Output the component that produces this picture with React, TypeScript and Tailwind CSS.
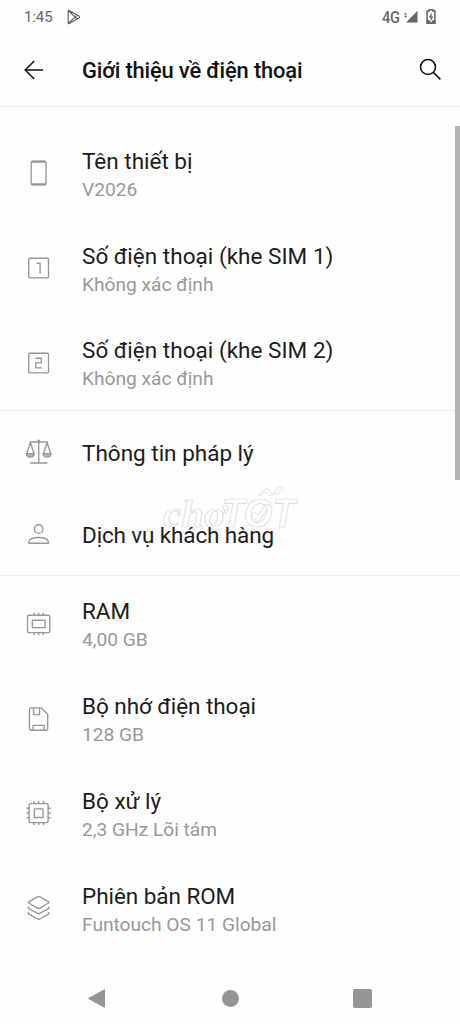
import type { ReactNode } from "react";

const Icon = ({ children }: { children: ReactNode }) => (
  <svg
    width="32"
    height="32"
    viewBox="-16.5 -16 32 32"
    fill="none"
    stroke="#979797"
    strokeWidth="1.35"
    strokeLinejoin="round"
    className="shrink-0"
  >
    {children}
  </svg>
);

const PhoneIcon = () => (
  <Icon>
    <rect x="-7.3" y="-11.8" width="14.8" height="23.6" rx="1.5" />
    <path d="M-6.8 -11.3H7M-6.8 11.3H7" strokeWidth="2" />
  </Icon>
);

const SimOneIcon = () => (
  <Icon>
    <rect x="-9.8" y="-9.8" width="19.8" height="19.6" rx="1" />
    <path d="M-1.8 -4.8H1.6V5.8" />
  </Icon>
);

const SimTwoIcon = () => (
  <Icon>
    <rect x="-9.8" y="-9.8" width="19.8" height="19.6" rx="1" />
    <path d="M-3.2 -4.8H2.8V-0.2H-2.8V4.8H3.4" />
  </Icon>
);

const ScalesIcon = () => (
  <Icon>
    <path d="M0.2 -11.5V11M-8.8 -10H9.2M-8.4 11H8.8M-8.1 -9.5L-11.8 2M-8.1 -9.5L-4.4 2M8.6 -9.5L4.9 2M8.6 -9.5L12.2 2" />
    <path d="M-12.2 1.6H-4.2C-4.7 6.2 -11.7 6.2 -12.2 1.6ZM4.6 1.6H12.6C12.1 6.2 5.1 6.2 4.6 1.6Z" fill="#b5b5b5" />
    <circle cx="0.2" cy="-11" r="1.5" fill="#979797" stroke="none" />
  </Icon>
);

const PersonIcon = () => (
  <Icon>
    <circle cx="0.2" cy="-5" r="4.3" />
    <path d="M-9.7 9.2V7.8C-8.2 2 8.5 2 10 7.8V9.2Z" />
  </Icon>
);

const RamIcon = () => (
  <Icon>
    <rect x="-11" y="-8.8" width="22.2" height="17.4" rx="1.5" />
    <rect x="-6.2" y="-3.8" width="12.8" height="7.4" />
    <path d="M-4.4 -11.2V-8.6M0.2 -11.2V-8.6M4.8 -11.2V-8.6M-4.4 8.6V11M0.2 8.6V11M4.8 8.6V11" />
  </Icon>
);

const StorageIcon = () => (
  <Icon>
    <path d="M-7.6 -11.2H2.6L9.2 -4.8V9.6Q9.2 11.2 7.6 11.2H-7.4Q-9 11.2 -9 9.6V-9.8Q-9 -11.2 -7.6 -11.2Z" />
    <path d="M-5 -11V-4.4H1V-11M-5.4 11V6.4H5.8V11" />
  </Icon>
);

const CpuIcon = () => (
  <Icon>
    <rect x="-9.4" y="-9.4" width="19" height="19" rx="1.5" />
    <rect x="-4.1" y="-4.1" width="8.6" height="8.6" />
    <path d="M-4.6 -12V-9.4M0.2 -12V-9.4M5 -12V-9.4M-4.6 9.6V12M0.2 9.6V12M5 9.6V12M-12 -4.8H-9.4M-12 0H-9.4M-12 4.8H-9.4M9.6 -4.8H12.2M9.6 0H12.2M9.6 4.8H12.2" />
  </Icon>
);

const LayersIcon = () => (
  <Icon>
    <path d="M-9.7 -6.2L-0.6 -11.3Q0.2 -11.7 1 -11.3L10.1 -6.2Q10.8 -5.6 10.1 -5L1 0.3Q0.2 0.8 -0.6 0.3L-9.7 -5Q-10.4 -5.6 -9.7 -6.2Z" />
    <path d="M-9.4 -1.2Q-11 -0.2 -9.6 0.6L0.2 5.9L10 0.6Q11.4 -0.2 9.8 -1.2M-9.4 4.4Q-11 5.4 -9.6 6.1L0.2 11.5L10 6.1Q11.4 5.4 9.8 4.4" />
  </Icon>
);

type RowProps = { icon: ReactNode; title: string; value?: string; spacing?: string };

const Row = ({ icon, title, value, spacing = "tracking-normal" }: RowProps) => (
  <li className={`flex items-center pl-[22px] ${value ? "h-[94.8px]" : "h-[82px]"}`}>
    {icon}
    <div className={`ml-[28px] flex flex-col ${value ? "pt-[2px]" : "pt-px"}`}>
      <span className={`text-[22.5px] leading-[30px] whitespace-nowrap text-[#1c1c1c] ${spacing}`}>{title}</span>
      {value && <span className="text-[19.2px] leading-[27px] tracking-[-0.02px] whitespace-nowrap text-[#999]">{value}</span>}
    </div>
  </li>
);

const Watermark = () => (
  <svg
    width="144"
    height="52"
    viewBox="158 482 144 52"
    fill="none"
    stroke="#d4d4d4"
    strokeWidth="0.7"
    className="pointer-events-none absolute top-[482px] left-[158px]"
  >
    <text x="163" y="527" fontSize="37" fontWeight="700" fontStyle="italic" fontFamily="Liberation Serif, serif" textLength="63" lengthAdjust="spacingAndGlyphs">
      chơ
    </text>
    <text x="222" y="527" fontSize="40" fontWeight="700" fontStyle="italic" fontFamily="Liberation Sans, sans-serif" textLength="73" lengthAdjust="spacingAndGlyphs">
      TOT
    </text>
    <path d="M258 495l8-6h3l4 6h-4l-3-3-4 3ZM274 494l4-7q4-1 5 1l-5 6Z" />
    <path d="M251 515l3-3 4 3 8-11 4 1-11 16q-2 1-4-1Z" />
  </svg>
);

export default function App() {
  return (
    <div className="relative flex h-[1024px] w-[460px] flex-col overflow-hidden bg-[#fefefe] font-['Roboto',sans-serif]">
      <header className="flex h-[107px] flex-col border-b border-[#ececec]">
        <div className="flex h-[34px] items-center pr-[23px] pl-[24px] text-[#666]">
          <span className="text-[15px] leading-none tracking-[-0.1px]">1:45</span>
          <svg width="14" height="16" viewBox="0 0 14 16" className="ml-[14px]" fill="none" stroke="#666" strokeWidth="1.2" strokeLinejoin="round">
            <path d="M1.2 2.1Q1.2 1 2.3 1.5L12 6.9Q13.2 8 12 9.1L2.3 14.5Q1.2 15 1.2 13.9ZM1.8 2L10.2 10M1.8 14L10.2 6" />
          </svg>
          <span className="ml-auto w-[18px] origin-left scale-x-[0.86] text-[17px] leading-none font-medium tracking-[-0.3px]">4G</span>
          <svg width="14" height="14" viewBox="0 0 14 14" className="ml-[4px]" fill="#666">
            <path d="M13.5 0.8V12.5H2.2ZM0 4.6L1.6 2.4L3.2 4.6ZM0 5.8L1.6 8L3.2 5.8Z" />
          </svg>
          <svg width="12" height="18" viewBox="0 0 12 18" className="ml-[7px]" fill="none" stroke="#666" strokeWidth="1.5">
            <path d="M4.2 3V1.8H7.8V3H9.9V15.3H2.1V3Z" />
            <path d="M1.5 12H4L6 14.5L8 12H10.5V16H1.5Z" fill="#666" stroke="none" />
            <path d="M6.6 4.8L3.7 9.6H5.6V13.6L8.4 8.4H6.6Z" fill="#666" stroke="none" />
          </svg>
        </div>
        <div className="flex h-[72px] items-center pr-[18px] pl-[24px]">
          <svg width="20" height="20" viewBox="0 0 20 20" fill="none" stroke="#111" strokeWidth="1.5">
            <path d="M19 10H1.5M10.2 1L1.2 10L10.2 19" />
          </svg>
          <h1 className="mt-[2px] ml-[38px] text-[21.9px] leading-[30px] font-medium tracking-[-0.15px] whitespace-nowrap text-[#111]">
            Giới thiệu về điện thoại
          </h1>
          <svg width="23" height="23" viewBox="0 0 23 23" className="mt-[-2px] ml-auto" fill="none" stroke="#111" strokeWidth="1.6">
            <circle cx="9" cy="9" r="7.5" />
            <path d="M14.4 14.4L21.4 21.4" />
          </svg>
        </div>
      </header>
      <main className="pt-[19px]">
        <ul className="border-b border-[#ececec]">
          <Row icon={<PhoneIcon />} title="Tên thiết bị" value="V2026" />
          <Row icon={<SimOneIcon />} title="Số điện thoại (khe SIM 1)" value="Không xác định" spacing="tracking-[0.03px]" />
          <Row icon={<SimTwoIcon />} title="Số điện thoại (khe SIM 2)" value="Không xác định" spacing="tracking-[0.03px]" />
        </ul>
        <ul className="border-b border-[#ececec]">
          <Row icon={<ScalesIcon />} title="Thông tin pháp lý" />
          <Row icon={<PersonIcon />} title="Dịch vụ khách hàng" spacing="tracking-[-0.13px]" />
        </ul>
        <ul>
          <Row icon={<RamIcon />} title="RAM" value="4,00 GB" />
          <Row icon={<StorageIcon />} title="Bộ nhớ điện thoại" value="128 GB" spacing="tracking-[-0.05px]" />
          <Row icon={<CpuIcon />} title="Bộ xử lý" value="2,3 GHz Lõi tám" />
          <Row icon={<LayersIcon />} title="Phiên bản ROM" value="Funtouch OS 11 Global" spacing="tracking-[-0.05px]" />
        </ul>
      </main>
      <nav className="mt-auto flex h-[51px] items-center justify-between pr-[88px] pl-[87px]">
        <svg width="20" height="20" viewBox="0 0 20 20" fill="#959595" stroke="#959595" strokeLinejoin="round">
          <path d="M1.5 9.5L17.5 0.8V18.2Z" />
        </svg>
        <span className="size-[17px] rounded-full bg-[#959595]" />
        <span className="size-[19px] rounded-[2px] bg-[#959595]" />
      </nav>
      <Watermark />
      <div className="absolute top-[126px] right-0 h-[354px] w-[5px] bg-[#b5b5b5]" />
    </div>
  );
}
